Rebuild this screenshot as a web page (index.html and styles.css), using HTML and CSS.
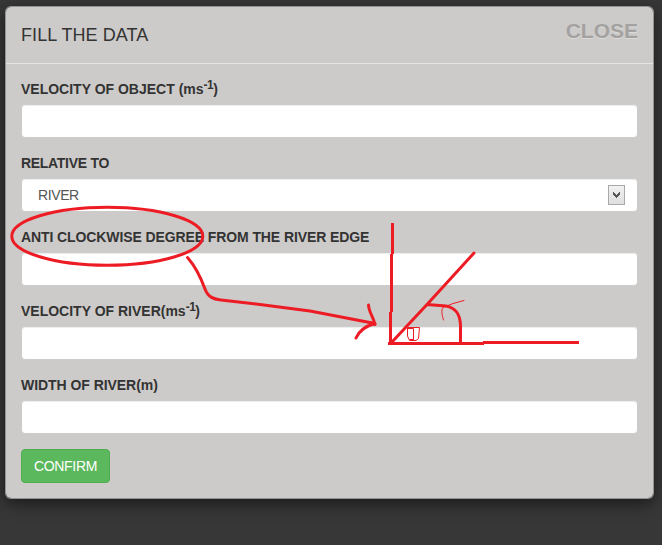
FILE: index.html
```html
<!DOCTYPE html>
<html lang="en">
<head>
<meta charset="utf-8">
<title>Fill the data</title>
<link rel="stylesheet" href="styles.css">
</head>
<body>
<main class="modal">
  <header class="modal-header">
    <h1 class="modal-title">FILL THE DATA</h1>
    <button class="close" type="button">CLOSE</button>
  </header>
  <form class="modal-body">
    <div class="group">
      <label class="label" for="object">VELOCITY OF OBJECT (ms<sup>-1</sup>)</label>
      <input class="control" id="object" type="text">
    </div>
    <div class="group">
      <label class="label label-relative">RELATIVE TO</label>
      <div class="control select">
        <span class="select-value">RIVER</span>
        <span class="select-button">
          <svg width="7" height="6" viewBox="0 0 7 6" shape-rendering="crispEdges"><path d="M0 0h1v1h1v1h1v1h1v-1h1v-1h1v-1h1v3h-1v1h-1v1h-1v1h-1v-1h-1v-1h-1v-1h-1z" fill="#555"/></svg>
        </span>
      </div>
    </div>
    <div class="group">
      <label class="label label-degree" for="degree">ANTI CLOCKWISE DEGREE FROM THE RIVER EDGE</label>
      <input class="control" id="degree" type="text">
    </div>
    <div class="group">
      <label class="label" for="river">VELOCITY OF RIVER(ms<sup>-1</sup>)</label>
      <input class="control" id="river" type="text">
    </div>
    <div class="group">
      <label class="label label-width" for="width">WIDTH OF RIVER(m)</label>
      <input class="control" id="width" type="text">
    </div>
    <button class="confirm" type="button">CONFIRM</button>
  </form>
</main>
<svg class="annotation" width="662" height="545" viewBox="0 0 662 545">
  <ellipse cx="107.300" cy="236.300" rx="95.500" ry="29"/>
  <path d="M187.500 257.500C195 266 201 278 205 289C208 297 213 299 221 300L260 304.500L310 311L375 323.500"/>
  <path d="M368.500 305C369 313 374 318 374.500 323.500C366 326 359 331 356 338M371 323L375 324.500"/>
  <path class="square" d="M392.500 223V254M391.500 254V312M390.500 312V343.500M388 343.500H484M483 342.500H579"/>
  <path d="M392 342L427 304.500L474 253M427 304.500L446 306C456 308 460 314 460.500 325V343"/>
  <path class="thin" d="M464 300.500L453 303.500L443 307.500C441 310 442 315 443.500 320M408 327.500H419.500L418.500 338.500L416 340.500H409.500L407.500 336V328M408 328.500H413.500V340M410 339.500H413"/>
</svg>
</body>
</html>
```
FILE: styles.css
```css
* { box-sizing: border-box; }
body {
  margin: 0;
  padding: 6px 7px 0 5px;
  min-height: 545px;
  background: #373737;
  color: #333;
  font: 14px/20px "Liberation Sans", Arial, sans-serif;
  overflow: hidden;
}
.modal {
  width: 649px;
  height: 493px;
  background: #cdcbc9;
  background-clip: padding-box;
  border: 1px solid rgba(153, 153, 153, .95);
  border-radius: 6px;
  box-shadow: 0 5px 15px rgba(0, 0, 0, .5);
}
.modal-header {
  display: flex;
  justify-content: space-between;
  align-items: flex-start;
  height: 57px;
  padding: 15px;
  border-bottom: 1px solid #e5e5e5;
}
.modal-title { margin: 0; font-size: 18px; font-weight: 400; line-height: 26px; letter-spacing: .08px; }
.close {
  margin: -2px 0 0;
  padding: 0;
  border: 0;
  background: none;
  color: #a3a2a1;
  font: bold 21px/21px "Liberation Sans", Arial, sans-serif;
  text-shadow: 0 1px 0 #dcdbda;
}
.modal-body { padding: 15px; }
.group { height: 59px; margin-bottom: 15px; }
.label { display: block; height: 20px; margin-bottom: 5px; font-weight: 700; white-space: nowrap; }
.label sup { position: relative; top: -5px; font-size: 12px; line-height: 0; vertical-align: baseline; letter-spacing: -.5px; }
.label-relative { letter-spacing: -.3px; }
.label-degree { letter-spacing: -.1px; }
.label-width { letter-spacing: -.05px; }
.control {
  display: block;
  width: 100%;
  height: 34px;
  padding: 6px 12px;
  background: #fff;
  border: 1px solid #ccc;
  border-radius: 4px;
  box-shadow: inset 0 1px 1px rgba(0, 0, 0, .075);
  color: #555;
  font: inherit;
}
.select { display: flex; align-items: center; justify-content: space-between; padding: 0 12px 0 16px; }
.select-value { letter-spacing: -.4px; }
.select-button {
  display: flex;
  align-items: center;
  justify-content: center;
  width: 17px;
  height: 20px;
  border: 1px solid #a9a9a9;
  background: linear-gradient(#f1f1f1, #dfdfdf);
}
.confirm {
  display: block;
  width: 89px;
  height: 34px;
  padding: 0;
  background: #5cb85c;
  border: 1px solid #4cae4c;
  border-radius: 4px;
  color: #fff;
  font: 14px/20px "Liberation Sans", Arial, sans-serif;
  letter-spacing: -.3px;
}
.annotation { position: absolute; inset: 0; pointer-events: none; fill: none; stroke: #ed1c24; stroke-width: 3; stroke-linecap: round; stroke-linejoin: round; }
.thin { stroke-width: 1; }
.square { stroke-linecap: butt; }
```
